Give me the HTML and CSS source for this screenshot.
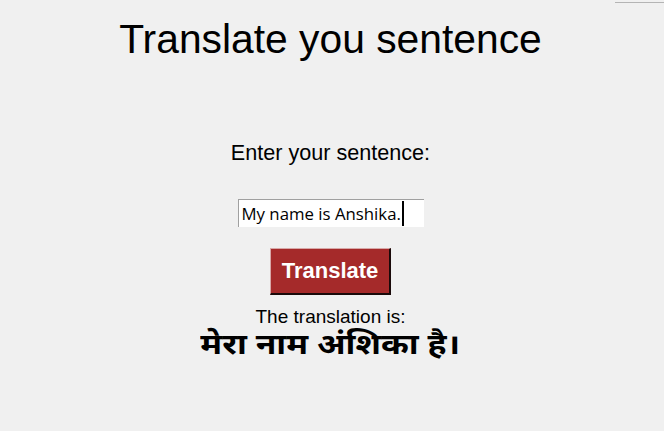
FILE: index.html
```html
<!DOCTYPE html>
<html lang="en">
<head>
<meta charset="utf-8">
<title>Translate</title>
<link rel="stylesheet" href="styles.css">
</head>
<body>
<div class="topline"></div>
<main class="app">
  <h1 class="title">Translate you sentence</h1>
  <label class="prompt">Enter your sentence:</label>
  <div class="entry"><span class="entry-text">My name is Anshika.</span><span class="caret"></span></div>
  <button class="btn" type="button">Translate</button>
  <p class="result-label">The translation is:</p>
  <p class="result" lang="hi">मेरा नाम अंशिका है।</p>
</main>
</body>
</html>
```
FILE: styles.css
```css
html, body {
  margin: 0;
  padding: 0;
  background: #f0f0f0;
  height: 100%;
}
body {
  position: relative;
  overflow: hidden;
  font-family: "Liberation Sans", Arial, sans-serif;
  color: #000;
}
.topline {
  position: absolute;
  top: 2px;
  left: 615px;
  right: 0;
  height: 1px;
  background: #b4b4b4;
}
.app {
  width: 661px;
  display: flex;
  flex-direction: column;
  align-items: center;
}
.title {
  margin: 19px 0 0;
  font-weight: normal;
  font-size: 40.8px;
  line-height: 40px;
  height: 40px;
}
.prompt {
  margin-top: 83px;
  font-size: 21.6px;
  line-height: 1;
  height: 22px;
}
.entry {
  margin-top: 35px;
  box-sizing: border-box;
  width: 186px;
  height: 28px;
  background: #fff;
  border-top: 1px solid #a0a0a0;
  border-left: 1px solid #a0a0a0;
  display: flex;
  align-items: center;
  padding-left: 3px;
  font-family: "Open Sans", "Noto Sans", sans-serif;
  font-size: 16.8px;
}
.caret {
  display: inline-block;
  width: 2px;
  height: 25px;
  background: #000;
  margin-left: 1px;
}
.btn {
  margin-top: 21px;
  box-sizing: border-box;
  width: 121px;
  height: 47px;
  background: #a52a2a;
  color: #fff;
  font-family: "Liberation Sans", Arial, sans-serif;
  font-weight: bold;
  font-size: 22px;
  padding: 0;
  border-style: solid;
  border-width: 1px 2px 2px 1px;
  border-color: #d8a8a8 #1a0a0a #1a0a0a #d8a8a8;
}
.result-label {
  margin: 12px 0 0;
  font-size: 19px;
  line-height: 1;
}
.result {
  margin: 7px 0 0;
  font-family: "Noto Sans Devanagari", "Lohit Devanagari", "Noto Sans", sans-serif;
  font-weight: bold;
  font-size: 28px;
  line-height: 1;
  transform: scaleX(1.2);
}
```
